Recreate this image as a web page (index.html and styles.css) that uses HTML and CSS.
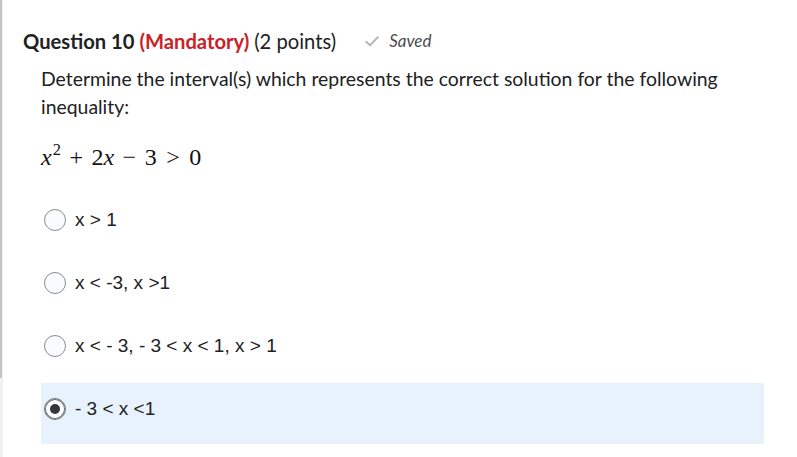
FILE: index.html
```html
<!DOCTYPE html>
<html lang="en">
<head>
<meta charset="utf-8">
<title>Question 10</title>
<link rel="stylesheet" href="styles.css">
</head>
<body>
<div class="page">
  <div class="rail"><div class="thumb"></div></div>
  <main class="quiz">
    <h2 class="head">
      <span class="qtitle">Question 10 <span class="mand">(Mandatory)</span> <span class="pts">(2 points)</span></span>
      <span class="saved">
        <svg class="check" width="14" height="11" viewBox="0 0 14 11"><path d="M1.2 5.8 L5 9.3 L12.8 1.3" fill="none" stroke="#b5b8ba" stroke-width="2" stroke-linecap="round" stroke-linejoin="round"/></svg>
        <span class="savedtxt">Saved</span>
      </span>
    </h2>
    <div class="body">
      <p class="qtext">Determine the interval(s) which represents the correct solution for the following inequality:</p>
      <p class="math"><i>x</i><sup>2</sup><span class="bin">+</span>2<i>x</i><span class="bin">−</span>3<span class="rel">&gt;</span>0</p>
      <div class="options">
        <label class="opt"><span class="radio"></span><span class="otxt">x &gt; 1</span></label>
        <label class="opt"><span class="radio"></span><span class="otxt">x &lt; -3, x &gt;1</span></label>
        <label class="opt"><span class="radio"></span><span class="otxt">x &lt; - 3, - 3 &lt; x &lt; 1, x &gt; 1</span></label>
        <label class="opt sel"><span class="radio on"></span><span class="otxt">- 3 &lt; x &lt;1</span></label>
      </div>
    </div>
  </main>
</div>
</body>
</html>
```
FILE: styles.css
```css
html, body {
  margin: 0;
  padding: 0;
  background: #ffffff;
}
.page {
  display: flex;
  width: 797px;
  height: 457px;
  overflow: hidden;
}
.rail {
  width: 3px;
  flex: 0 0 3px;
  background: #f0f0f0;
}
.thumb {
  width: 2px;
  height: 378px;
  background: #c5c5c5;
}
.quiz {
  flex: 1;
  padding-left: 20px;
  font-family: Lato, "Liberation Sans", sans-serif;
  color: #202122;
}
.head {
  margin: 0;
  padding-top: 27px;
  display: flex;
  align-items: center;
  font-size: 20.2px;
  line-height: 28px;
  font-weight: 700;
}
.mand {
  color: #cd2026;
}
.pts {
  font-weight: 400;
}
.saved {
  display: flex;
  align-items: center;
  margin-left: 29px;
  gap: 10px;
}
.check {
  display: block;
}
.savedtxt {
  font-size: 17px;
  font-style: italic;
  font-weight: 400;
  color: #494c4e;
}
.body {
  padding-left: 18px;
}
.qtext {
  margin: 10px 0 0 0;
  width: 720px;
  font-size: 19.4px;
  line-height: 28px;
}
.math {
  margin: 22px 0 0 0;
  font-family: "Liberation Serif", "DejaVu Serif", serif;
  font-size: 24px;
  line-height: 28px;
  color: #111;
}
.math i {
  font-style: italic;
}
.math sup {
  font-size: 16.5px;
  line-height: 0;
  vertical-align: 10px;
  margin-left: 1px;
}
.bin {
  margin: 0 8.5px;
}
.rel {
  margin: 0 9.5px;
}
.options {
  margin-top: 23px;
  width: 723px;
}
.opt {
  display: flex;
  align-items: center;
  gap: 9px;
  height: 22px;
  padding: 15px 3px 24px 3px;
  margin-bottom: 2px;
  font-family: "Liberation Sans", Arial, sans-serif;
  font-size: 19px;
  color: #202122;
}
.sel {
  background: #e8f2fc;
}
.radio {
  width: 20px;
  height: 20px;
  border: 1px solid #8a8d90;
  border-radius: 50%;
  background: #f9fbff;
  display: flex;
  align-items: center;
  justify-content: center;
}
.radio.on {
  border-color: #6e7376;
  box-shadow: inset 0 0 0 1px #6e7376;
  background: #ffffff;
}
.radio.on::after {
  content: "";
  width: 10px;
  height: 10px;
  border-radius: 50%;
  background: #343638;
}
```
